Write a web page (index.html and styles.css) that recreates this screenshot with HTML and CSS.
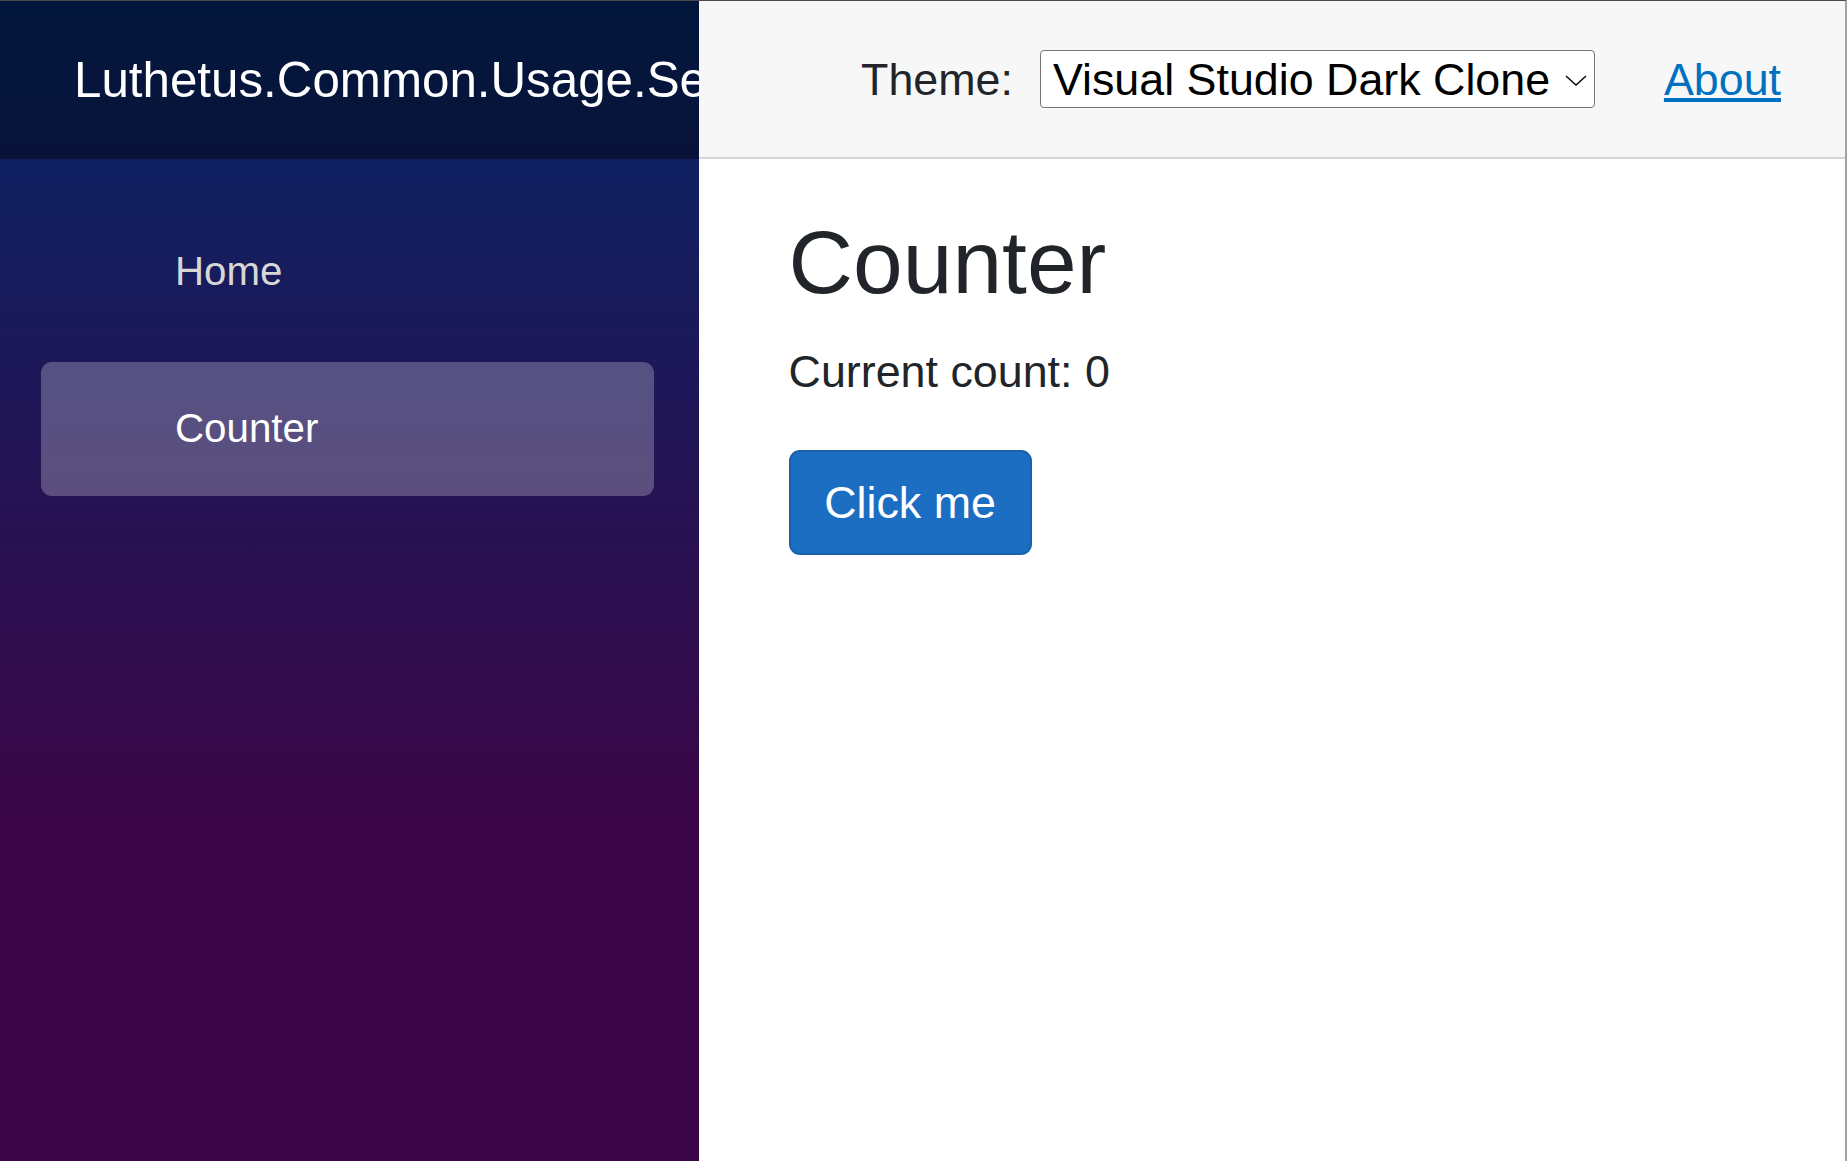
FILE: index.html
```html
<!DOCTYPE html>
<html lang="en">
<head>
<meta charset="utf-8">
<title>Counter</title>
<link rel="stylesheet" href="styles.css">
</head>
<body>
<div class="page">
  <div class="sidebar">
    <div class="brand-row">
      <a class="brand" href="#">Luthetus.Common.Usage.ServerSide</a>
    </div>
    <nav class="nav">
      <div class="nav-item"><a class="nav-link" href="#">Home</a></div>
      <div class="nav-item"><a class="nav-link active" href="#">Counter</a></div>
    </nav>
  </div>
  <main class="main">
    <div class="top-row">
      <label class="theme-label" for="theme">Theme:</label>
      <div class="select-wrap">
        <select id="theme" class="theme-select">
          <option>Visual Studio Dark Clone</option>
          <option>Visual Studio Light Clone</option>
        </select>
        <svg class="chevron" width="22" height="11" viewBox="0 0 22 11" aria-hidden="true">
          <polyline points="1,1 11,10 21,1" fill="none" stroke="#111" stroke-width="1.6"/>
        </svg>
      </div>
      <a class="about" href="#">About</a>
    </div>
    <article class="content">
      <h1 class="title">Counter</h1>
      <p class="count">Current count: 0</p>
      <button class="btn-primary" type="button">Click me</button>
    </article>
  </main>
</div>
</body>
</html>
```

FILE: styles.css
```css
html, body {
  margin: 0;
  padding: 0;
  height: 100%;
}

body {
  font-family: "Liberation Sans", Arial, Helvetica, sans-serif;
  color: #212529;
  background: #ffffff;
}

.page {
  display: flex;
  height: 100vh;
  box-sizing: border-box;
  border-top: 1px solid #4a4a4a;
  border-right: 2px solid #a3a3a3;
}

/* Sidebar */
.sidebar {
  width: 699px;
  flex: 0 0 699px;
  background-image: linear-gradient(180deg, rgb(5, 39, 103) 0%, #3a0647 70%);
  display: flex;
  flex-direction: column;
}

.brand-row {
  height: 158px;
  box-sizing: border-box;
  background-color: rgba(0, 0, 0, 0.4);
  display: flex;
  align-items: center;
  padding-left: 74px;
  overflow: hidden;
}

.brand {
  display: block;
  min-width: 0;
  flex: 1;
  overflow: hidden;
  white-space: nowrap;
  color: #ffffff;
  text-decoration: none;
  font-size: 49.3px;
  line-height: 1.5;
}

.nav {
  display: flex;
  flex-direction: column;
  padding-top: 46px;
}

.nav-item {
  padding: 0 45px 22.4px 41px;
}

.nav-link {
  display: flex;
  align-items: center;
  height: 134.4px;
  padding-left: 134px;
  border-radius: 11px;
  color: #d7d7d7;
  text-decoration: none;
  font-size: 40.3px;
}

.nav-link.active {
  background-color: rgba(255, 255, 255, 0.25);
  color: #ffffff;
}

/* Main */
.main {
  flex: 1;
  display: flex;
  flex-direction: column;
  min-width: 0;
}

.top-row {
  height: 158px;
  box-sizing: border-box;
  background-color: #f7f7f7;
  border-bottom: 2px solid #d6d5d5;
  display: flex;
  align-items: center;
  justify-content: flex-end;
  padding-right: 64px;
  font-size: 44.8px;
}

.theme-label {
  color: #212529;
  margin-right: 27px;
}

.select-wrap {
  position: relative;
  display: flex;
}

.theme-select {
  appearance: none;
  -webkit-appearance: none;
  width: 555px;
  height: 58px;
  box-sizing: border-box;
  border: 1px solid #767676;
  border-radius: 4px;
  background: #ffffff;
  color: #000000;
  font-family: "Liberation Sans", Arial, Helvetica, sans-serif;
  font-size: 44.8px;
  padding: 0 40px 0 12px;
  margin: 0;
}

.chevron {
  position: absolute;
  left: 525px;
  top: 25px;
  pointer-events: none;
}

.about {
  margin-left: 69px;
  color: #0071c1;
  text-decoration: underline;
  white-space: nowrap;
}

.content {
  padding: 49.5px 24px 0 89.6px;
}

.title {
  margin: 0 0 22.4px;
  font-size: 89.3px;
  font-weight: 400;
  line-height: 1.2;
  color: #212529;
}

.count {
  margin: 0 0 44.8px;
  font-size: 44.8px;
  line-height: 1.5;
  color: #212529;
}

.btn-primary {
  font-family: "Liberation Sans", Arial, Helvetica, sans-serif;
  font-size: 44.8px;
  line-height: 1.5;
  padding: 16.8px 33.6px;
  border: 2px solid #1861ac;
  border-radius: 11px;
  background-color: #1b6ec2;
  color: #ffffff;
  cursor: pointer;
}
```
